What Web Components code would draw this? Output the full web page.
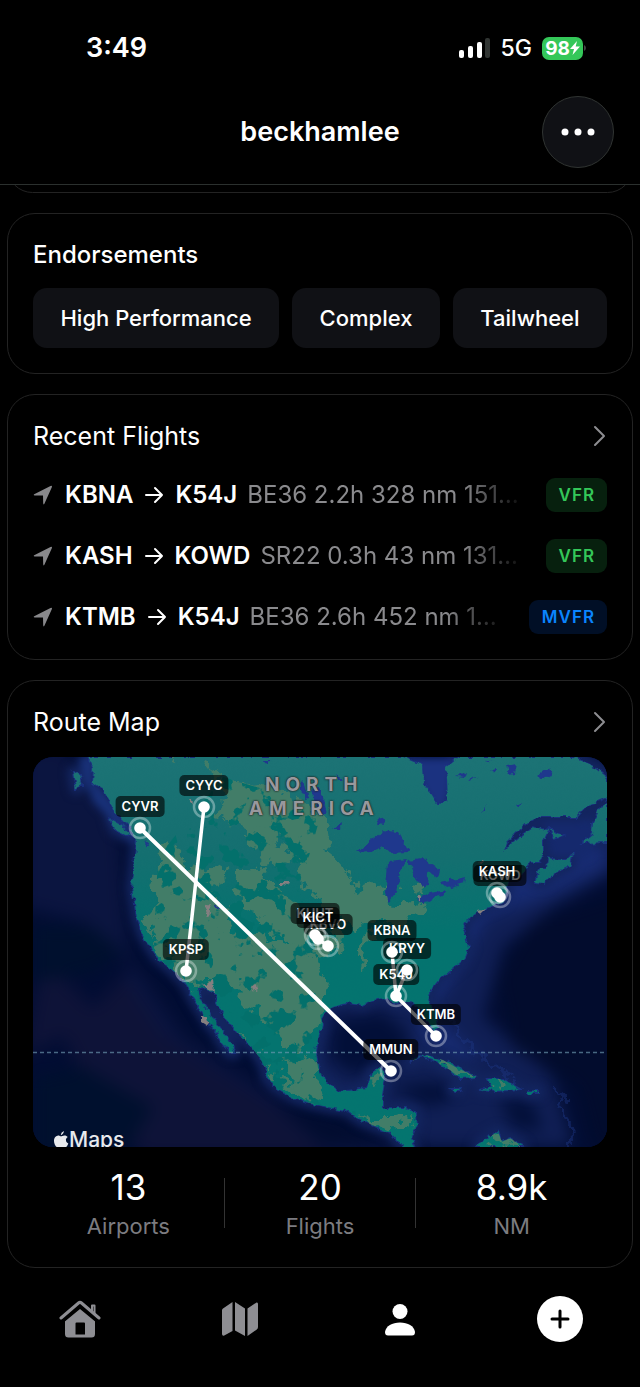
<!DOCTYPE html>
<html lang="en">
<head>
<meta charset="utf-8">
<meta name="viewport" content="width=device-width, initial-scale=1">
<title>beckhamlee</title>
<style>
  body {
    margin: 0;
    background: #000;
    color: #fff;
    font-family: Inter, "Liberation Sans", sans-serif;
  }
</style>
</head>
<body>
<profile-screen></profile-screen>

<script>
class BaseElement extends HTMLElement {
  constructor() {
    super();
    this.attachShadow({ mode: 'open' });
  }

  connectedCallback() {
    this.shadowRoot.innerHTML = `<style>* { box-sizing: border-box; } ${this.styles()}</style>${this.markup()}`;
  }

  styles() {
    return ':host { display: block; }';
  }

  markup() {
    return '<slot></slot>';
  }
}

class StatusBar extends BaseElement {
  styles() {
    return `
      :host { display: flex; justify-content: space-between; align-items: center; height: 96px; padding: 0 54px 0 86px; }
      time { font-size: 27px; font-weight: 600; line-height: 32px; }
      .right { display: flex; align-items: center; }
      .net { font-size: 23px; font-weight: 500; line-height: 24px; margin: 0 10px; }
      .battery { display: flex; align-items: center; justify-content: center; width: 41px; height: 23px; border-radius: 7px; background: #34c759; font-size: 19px; font-weight: 700; }
      svg { display: block; }
    `;
  }

  markup() {
    return `
      <time>3:49</time>
      <div class="right">
        <svg width="32" height="21" viewBox="0 0 32 21" fill="#fff" aria-hidden="true">
          <rect x="0" y="12" width="5" height="8" rx="2"/>
          <rect x="9" y="8" width="5" height="12" rx="2"/>
          <rect x="18" y="4" width="5" height="16" rx="2"/>
          <rect x="26" y="0" width="5" height="20" rx="2" fill="#303432"/>
        </svg>
        <span class="net">5G</span>
        <span class="battery">98<svg width="10" height="16" viewBox="0 0 10 16" fill="#fff" aria-hidden="true"><path d="M7 1 0 9h4l-1.500 6L10 6.500H5.700Z"/></svg></span>
        <svg width="3" height="8" viewBox="0 0 3 8" fill="#444" aria-hidden="true"><path d="M1 1Q3 2 3 4T1 7Z"/></svg>
      </div>
    `;
  }
}

class NavHeader extends BaseElement {
  styles() {
    return `
      :host { display: grid; grid-template-columns: 1fr auto 1fr; align-items: center; padding: 0 26px 16px; border-bottom: 1px solid #2b302e; }
      h1 { grid-column: 2; margin: 0; font-size: 27px; line-height: 32px; font-weight: 600; }
      button { justify-self: end; display: flex; align-items: center; justify-content: center; width: 72px; height: 72px; padding: 0; border: 1px solid #303432; border-radius: 50%; background: #101115; color: #fff; }
    `;
  }

  markup() {
    return `
      <h1><slot></slot></h1>
      <button aria-label="More">
        <svg width="34" height="8" viewBox="0 0 34 8" fill="currentColor"><circle cx="4" cy="4" r="3.500"/><circle cx="17" cy="4" r="3.500"/><circle cx="30" cy="4" r="3.500"/></svg>
      </button>
    `;
  }
}

class PanelCard extends BaseElement {
  styles() {
    return `
      :host { display: block; border: 1px solid #232323; border-radius: 28px; padding: 24px 25px 25px; }
      .head { display: flex; align-items: center; justify-content: space-between; color: inherit; text-decoration: none; }
      h2 { margin: 0; font-size: 25px; line-height: 34px; font-weight: 400; }
      :host([strong]) h2 { font-size: 24px; font-weight: 500; }
      svg { display: block; }
    `;
  }

  markup() {
    const title = this.getAttribute('heading');
    const href = this.getAttribute('href');
    if (!title) return '<slot></slot>';
    if (!href) return `<div class="head"><h2>${title}</h2></div><slot></slot>`;
    return `
      <a class="head" href="${href}">
        <h2>${title}</h2>
        <svg width="14" height="22" viewBox="0 0 14 22" fill="none" stroke="#8d8d91" stroke-width="2" stroke-linecap="round" stroke-linejoin="round" aria-hidden="true"><path d="m2 2 9 9-9 9"/></svg>
      </a>
      <slot></slot>
    `;
  }
}

class EndorsementChip extends BaseElement {
  styles() {
    return `
      :host { display: block; padding: 0 26px; border-radius: 14px; background: #101115; font-size: 22px; line-height: 60px; font-weight: 500; white-space: nowrap; text-align: center; }
    `;
  }
}

class FlightRow extends BaseElement {
  styles() {
    return `
      :host { display: flex; align-items: center; height: 35px; font-size: 24px; line-height: 34px; white-space: nowrap; }
      svg { display: block; flex: none; }
      .plane { margin-right: 12px; }
      .code { font-weight: 600; }
      .arrow { margin: 0 11px; }
      .details { flex: 1; min-width: 0; overflow: hidden; margin: 0 20px 0 10px; color: #8a8a8d;
        -webkit-mask-image: linear-gradient(to left, transparent, #000 64px); mask-image: linear-gradient(to left, transparent, #000 64px); }
      .badge { padding: 0 12px 0 13px; border-radius: 9px; font-size: 17px; line-height: 34px; font-weight: 600; letter-spacing: 1px; color: #34c759; background: #07200e; }
      .badge.MVFR { color: #0a84ff; background: #010f26; }
    `;
  }

  markup() {
    const rules = this.getAttribute('rules');
    return `
      <svg class="plane" width="20" height="20" viewBox="0 0 20 20" fill="#88888b" aria-hidden="true"><path d="M1.200 9.300 17.500 1.100q2-.8 1.300 1.200L11.400 18.700q-1 1.600-1.200-.4L10 10.600 1.700 10.500q-1.600-.3-.5-1.200Z"/></svg>
      <span class="code">${this.getAttribute('from')}</span>
      <svg class="arrow" width="20" height="20" viewBox="0 0 20 20" fill="none" stroke="#fff" stroke-width="2" stroke-linecap="round" stroke-linejoin="round" role="img" aria-label="to"><path d="M2 10h16M11 3l7 7-7 7"/></svg>
      <span class="code">${this.getAttribute('to')}</span>
      <span class="details"><slot></slot></span>
      <span class="badge ${rules}">${rules}</span>
    `;
  }
}

class MapPin extends BaseElement {
  styles() {
    // The host has no size: it marks the airport's spot on the map
    return `
      :host { position: absolute; width: 0; height: 0; }
      .dot { position: absolute; left: -12px; top: -12px; width: 24px; height: 24px; }
      .label { position: absolute; top: -32px; left: 0; transform: translateX(-50%); padding: 0 6px; border-radius: 5px; background: rgba(0, 0, 0, 0.62); font-size: 13px; line-height: 21px; font-weight: 600; }
    `;
  }

  markup() {
    return `
      <span class="label"><slot></slot></span>
      <svg class="dot" viewBox="0 0 24 24" aria-hidden="true"><circle cx="12" cy="12" r="10" fill="none" stroke="#fff" stroke-opacity=".35" stroke-width="2.500"/><circle cx="12" cy="12" r="5.800" fill="#fff"/></svg>
    `;
  }
}

const LAND = 'M55 0 60 11 59 25 70 33 77 46 87 61 97 71 104 83 102 98 101 115 99 131 102 148 104 161 110 178 119 193 125 201 137 211 145 218 154 228 160 241 169 255 175 266 184 276 189 286 197 296 202 296 197 286 189 273 179 260 167 243 165 231 174 230 182 238 187 253 197 266 207 278 217 288 227 301 232 311 234 321 244 331 260 340 277 346 300 351 314 353 327 363 344 370 357 375 367 386 369 390H382L378 381 383 368 382 355 372 351 349 351 349 338 352 321 349 311 339 315 334 331 320 333 307 335 294 325 285 311 283 295 285 281 289 268 287 258 300 250 314 246 330 248 340 243 352 241 364 246 377 245 387 251 394 263 402 275 405 270 402 255 395 245 399 231 407 221 420 211 430 203 435 191 430 171 437 161 447 153 457 150 470 143 474 131 477 121 490 116 497 105 507 105 510 98 510 85 515 73 500 70 489 78 477 88 470 95 474 85 484 75 495 66 504 60 544 60 555 48 574 40V21L564 13 550 3 540 0H425L412 11 414 21 415 43 405 48 399 38 390 26 389 8 370 0Z';

const ISLANDS = [
  'M502 125 507 111 514 111 515 101 524 103 534 103 540 96 537 108 524 115 510 126Z',
  'M574 43 565 55 560 65 559 78 550 86 574 85Z',
  'M377 305 392 298 410 303 424 311 444 320 427 321 417 313 400 303 387 299Z',
  'M455 322 470 322 478 327 487 332 464 334 447 332 459 330Z',
  'M419 332h8l1 2h-6Z', 'M495 334h10v2h-10Z',
  'M444 390 450 383 465 375 469 385 477 381 490 390Z',
  'M40 15 47 18 49 28 43 32ZM78 62 90 69 97 80 82 73Z',
  'M516 73 531 79 522 82Z'
];

const LAKES = [
  'M324 96 339 83 350 73 365 75 376 95 357 96 350 90 337 95Z',
  'M355 105 374 103 367 115 364 135 355 146 352 135 354 121Z',
  'M374 103 390 101 407 113 405 120 395 116 394 130 385 126 380 115Z',
  'M384 143 397 136 414 133 410 138 390 146Z',
  'M407 125 434 120 432 126 414 131Z',
  'M267 25 270 22 272 33 277 41 273 42 267 33Z', 'M279 27 288 34 294 56 289 59 284 50 280 42Z',
  'M345 61 350 60 352 68 344 67Z', 'M300 72 308 66 307 72Z', 'M303 18 309 22 305 22Z',
  'M232 3h5l-3 4ZM181 146l5 5-2 3-4-5ZM113 82l2 8-3 0Z',
  'M423 20 434 15 432 21ZM434 23 446 19 436 24ZM474 9 483 7 481 16 476 17ZM505 18 516 10 519 18 507 22ZM448 55 455 48 451 54ZM482 48l7-3-4 6ZM452 5l8-2-5 3ZM457 12l6-2-1 5Z'
];

const PLAINS = [
  'M187 27 196 20 227 27 267 43 295 63 299 97 314 113 330 132 350 123 352 143 397 150 384 163 347 168 317 167 284 140 267 123 264 97 244 73 217 77 200 67 180 60 190 44Z',
  'M122 102 134 88 146 98 160 115 177 112 190 105 191 122 178 138 190 150 196 174 212 180 232 178 262 190 284 200 294 230 288 262 275 280 278 290 262 296 244 276 225 258 205 238 188 228 165 228 140 215 119 193 122 184 110 164 124 148 118 126Z',
  'M205 112 230 110 244 132 266 150 285 166 308 178 295 204 260 190 230 165 208 140Z',
  'M208 70 240 68 245 86 217 94Z', 'M230 82 262 95 256 112 226 106Z',
  'M336 172 342 176 334 195 330 216 326 210 328 188Z',
  'M374 130 394 121 390 136 376 133Z',
  'M193 270 204 283 218 294 230 310 245 318 258 330 280 338 282 346 260 338 240 324 228 300Z',
  'M250 306 272 300 285 315 293 330 285 344 262 334Z',
  'M318 356 340 362 362 362 380 356 376 371 365 375 345 369Z',
  'M335 322 348 311 350 320 340 330Z',
  'M377 305 400 301 444 319 424 319 400 306Z', 'M455 322 480 326 470 333Z',
  'M464 376 468 384 478 381 488 389 456 388Z',
  'M177 10 192 17 180 24Z', 'M134 1h6l-2 4Z'
];

const DESERT = [
  'M165 228 174 227 180 222 181 236 174 229Z', 'M172 150 177 146 178 156 175 161Z',
  'M248 125l8 0-2 4-6-1Z', 'M218 230l4-3 1 6-4 2Z', 'M169 261l4-1 2 9-6-4Z',
  'M156 42l3 0 1 6ZM444 107l8-6-4 7Z', 'M386 137l3 2-2 5-3-4Z', 'M445 153l8-2-6 6Z'
];

const PINS = [
  ['MMUN', 358, 314], ['KTMB', 403, 279], ['K54J', 363, 239], ['KRYY', 374, 213],
  ['KBNA', 359, 195], ['KBVO', 295, 189], ['KUUT', 282, 178], ['KICT', 285, 182],
  ['KPSP', 153, 214], ['KOWD', 467, 140], ['KASH', 464, 136], ['CYVR', 107, 71], ['CYYC', 171, 50]
];

class RouteMap extends BaseElement {
  styles() {
    return `
      :host { display: block; position: relative; overflow: hidden; aspect-ratio: 574 / 390; border-radius: 20px; background: #020f35; }
      .terrain { display: block; width: 100%; height: 100%; }
      filter { color-interpolation-filters: sRGB; }
      .region { position: absolute; left: 49%; top: 4%; transform: translateX(-50%); font-size: 19px; line-height: 24px; font-weight: 700; letter-spacing: 6px; text-align: center; color: #99989d; text-shadow: 0 0 2px #222, 0 0 2px #222; }
      .brand { position: absolute; left: 20px; bottom: -6px; display: flex; align-items: center; font-size: 21px; line-height: 26px; font-weight: 500; color: #e8eaed; }
    `;
  }

  paths(list, fill) {
    return list.map(d => `<path d="${d}" fill="${fill}"/>`).join('');
  }

  markup() {
    const pins = PINS.map(([name, x, y]) =>
      `<map-pin style="left:calc(100% * ${x} / 574);top:calc(100% * ${y} / 390)">${name}</map-pin>`
    ).join('');
    const coast = [LAND, ...ISLANDS].join('');
    return `
      <svg class="terrain" viewBox="0 0 574 390" preserveAspectRatio="none" aria-hidden="true">
        <defs>
          <filter id="soft" x="-20%" y="-20%" width="140%" height="140%"><feGaussianBlur stdDeviation="8"/></filter>
          <filter id="shelf" x="-20%" y="-20%" width="140%" height="140%"><feGaussianBlur stdDeviation="4"/></filter>
          <filter id="rough"><feTurbulence type="fractalNoise" baseFrequency=".14" numOctaves="3" seed="4"/><feDisplacementMap in="SourceGraphic" scale="7" xChannelSelector="R" yChannelSelector="G"/></filter>
          <filter id="rougher"><feTurbulence type="fractalNoise" baseFrequency=".07" numOctaves="4" seed="9"/><feDisplacementMap in="SourceGraphic" scale="28" xChannelSelector="R" yChannelSelector="G"/></filter>
          <filter id="patches" x="0" y="0" width="100%" height="100%"><feTurbulence type="fractalNoise" baseFrequency=".055" numOctaves="4" seed="12"/><feColorMatrix values="0 0 0 0 0.01  0 0 0 0 .44  0 0 0 0 .42  20 0 0 0 -11.600"/><feComposite in2="SourceGraphic" operator="in"/></filter>
          <linearGradient id="ground" x1="0" y1="0" x2="0" y2="1"><stop offset="0" stop-color="#1c7375"/><stop offset=".25" stop-color="#146f70"/><stop offset=".45" stop-color="#04736f"/><stop offset="1" stop-color="#04756f"/></linearGradient>
          <clipPath id="coast"><path d="${coast}"/></clipPath>
        </defs>
        <rect width="574" height="390" fill="#020d33"/>
        <g filter="url(#soft)">
          <path d="M30-10 85 60 95 200 150 280 240 340 380 400H130L60 250 100 210 50 165-10 150V-10Z" fill="#0b1540"/>
          <path d="M10 200 60 250 90 220 130 280 240 350 300 400H110L60 340 30 280-10 300Z" fill="#0e1338"/>
          <path d="M420 0H590V110L520 150 470 190 450 260 520 320 540 390H390L340 340H290L270 260 380 230Z" fill="#101f55"/>
          <path d="M590 135 500 165 465 220 480 290 545 330 560 390H590Z" fill="#020c2d"/>
          <path d="M0 168 60 170 90 195 60 215 0 225ZM0 320 50 310 120 350 90 400H0Z" fill="#00102e"/>
          <path d="M300 265 350 255 378 280 365 300 320 318 295 300ZM355 330 400 325 430 333 400 350ZM465 340 500 345 510 375 480 370Z" fill="#020f38"/>
          <path d="M240 345 300 360 350 390H290Z" fill="#020d30"/>
          <path d="M500 75 574 50V112L520 138 455 160 438 190 410 240 390 250 415 270 450 305 420 300 385 280 395 220 430 160Z" fill="#172b72"/>
        </g>
        <g filter="url(#shelf)">
          <path d="${coast}" fill="none" stroke="#13255f" stroke-width="12" stroke-linejoin="round"/>
          <path d="M44 0 60 0 60 25 100 70 104 90 60 45Z" fill="#19327b"/>
          <path d="M375 0H425L412 55H400Z" fill="#1b3280"/>
          <path d="M510 65H574L555 100H520Z" fill="#15296d"/>
        </g>
        <path d="M520 330Q538 345 538 385M410 258Q424 280 450 300T480 325" filter="url(#rougher)" fill="none" stroke="#1c3580" stroke-width="4" stroke-opacity=".45"/>
        <g filter="url(#rough)">
          <path d="${coast}" fill="url(#ground)" stroke="#1b3586" stroke-width="2" stroke-opacity=".8" paint-order="stroke"/>
        </g>
        <g clip-path="url(#coast)">
          <g filter="url(#rougher)">${this.paths(PLAINS, '#427d68')}</g>
          <path d="M125 100 190 20 290 50 270 120 310 170 280 205 290 340 360 370 240 340 120 200Z" fill="#000" filter="url(#patches)"/>
        </g>
        <g filter="url(#rough)">${this.paths(LAKES, '#1f388d')}${this.paths(DESERT, '#857f80')}</g>
        <path d="M0 295.500H574" stroke="#6e9ab0" stroke-opacity=".65" stroke-width="1.500" stroke-dasharray="4 3" fill="none"/>
        <g stroke="#fff" stroke-linecap="round" fill="none">
          <path d="M107 71 358 314" stroke-width="4"/>
          <path d="M171 50 153 214M374 213 363 239 359 195M363 239 403 279M282 178 285 182 295 189M464 136 467 140" stroke-width="3.500"/>
        </g>
      </svg>
      <div class="region">NORTH<br>AMERICA</div>
      ${pins}
      <div class="brand">
        <svg width="16" height="20" viewBox="0 0 16 20" fill="currentColor" aria-hidden="true"><path d="M10.800 1Q11 4 7.800 5.200 7.600 2.400 10.800 1ZM8 6.300c1 0 2-.9 3.500-.8 1.400 0 2.500.6 3.200 1.600-2.700 1.700-2.300 5.100.6 6.300-.7 1.900-2.100 4.200-3.700 4.200-1.200 0-1.700-.7-3.200-.7s-2 .7-3.200.7C3.200 17.600 1 14.400 1 11c0-3.300 2-5.400 4.300-5.500 1.100 0 1.900.8 2.700.8Z"/></svg>
        <span>Maps</span>
      </div>
    `;
  }
}

class StatItem extends BaseElement {
  styles() {
    return `
      :host { display: block; flex: 1; text-align: center; }
      .value { font-size: 35px; line-height: 46px; }
      .label { font-size: 22px; line-height: 32px; color: #7c7c80; }
    `;
  }

  markup() {
    return `<div class="value">${this.getAttribute('value')}</div><div class="label"><slot></slot></div>`;
  }
}

class TabBar extends BaseElement {
  styles() {
    return `
      :host { display: block; padding: 28px 0 44px; }
      nav { display: grid; grid-template-columns: repeat(4, 1fr); align-items: center; justify-items: center; }
      a { display: flex; color: #8e8e93; }
      a[aria-current] { color: #fff; }
      button { display: flex; align-items: center; justify-content: center; width: 46px; height: 46px; padding: 0; border: 0; border-radius: 50%; background: #fff; color: #000; }
    `;
  }

  markup() {
    return `
      <nav>
        <a href="#home" aria-label="Home">
          <svg width="42" height="38" viewBox="0 0 42 38" fill="currentColor"><path d="M21 7.500 6 20.500V34q0 3.500 3.500 3.500h23q3.500 0 3.500-3.500V20.500ZM17.500 22.500h7.500q1 0 1 1v11H16.500v-11q0-1 1-1Z" fill-rule="evenodd"/><path d="M33 11V5.500h2.500V14" fill="none" stroke="currentColor" stroke-width="2" stroke-linejoin="round"/><path d="M21 5 4 20v3L21 9l17 14v-3Z" fill="#000"/><path d="M2 18 19.500 3q1.500-1.300 3 0L40 18" fill="none" stroke="currentColor" stroke-width="3" stroke-linecap="round" stroke-linejoin="round"/></svg>
        </a>
        <a href="#map" aria-label="Map">
          <svg width="38" height="36" viewBox="0 0 38 36" fill="currentColor"><path d="M2 7.500 11.500 1v29L2.800 34.800Q1 35 1 33V9.500Q1 8 2 7.500ZM14 1l10 6.500V35l-10-5.500ZM26.500 7.500 35.500 1.500Q37 1 37 3v23q0 1.500-1.200 2.500L26.500 35Z"/></svg>
        </a>
        <a href="#profile" aria-label="Profile" aria-current="page">
          <svg width="30" height="33" viewBox="0 0 30 33" fill="currentColor"><circle cx="15" cy="8.500" r="7.500"/><path d="M0 29C1 23 7 19.500 15 19.500S29 23 30 29q0 3.500-3 3.500H3Q0 32.500 0 29Z"/></svg>
        </a>
        <button aria-label="Add flight">
          <svg width="20" height="20" viewBox="0 0 20 20" fill="none" stroke="currentColor" stroke-width="3" stroke-linecap="round"><path d="M10 2v16M2 10h16"/></svg>
        </button>
      </nav>
    `;
  }
}

class ProfileScreen extends BaseElement {
  styles() {
    return `
      :host { display: flex; flex-direction: column; min-height: 100vh; }
      main { display: flex; flex-direction: column; gap: 20px; padding: 0 7px; }
      .previous { display: flex; align-items: flex-end; height: 8px; overflow: hidden; }
      .previous panel-card { flex: 1; }
      .chips { display: flex; gap: 13px; margin-top: 16px; }
      .chips > * { flex: auto; }
      .flights { display: grid; gap: 26px; margin-top: 24px; }
      route-map { margin: 18px 0 17px; }
      .stats { display: flex; align-items: center; }
      .stats i { width: 1px; height: 50px; background: #333; }
    `;
  }

  markup() {
    return `
      <header>
        <status-bar></status-bar>
        <nav-header>beckhamlee</nav-header>
      </header>
      <main>
        <div class="previous"><panel-card></panel-card></div>
        <panel-card heading="Endorsements" strong>
          <div class="chips">
            <endorsement-chip>High Performance</endorsement-chip>
            <endorsement-chip>Complex</endorsement-chip>
            <endorsement-chip>Tailwheel</endorsement-chip>
          </div>
        </panel-card>
        <panel-card heading="Recent Flights" href="#flights">
          <div class="flights">
            <flight-row from="KBNA" to="K54J" rules="VFR">BE36 2.2h 328 nm 151…</flight-row>
            <flight-row from="KASH" to="KOWD" rules="VFR">SR22 0.3h 43 nm 131…</flight-row>
            <flight-row from="KTMB" to="K54J" rules="MVFR">BE36 2.6h 452 nm 1…</flight-row>
          </div>
        </panel-card>
        <panel-card heading="Route Map" href="#routes">
          <route-map></route-map>
          <div class="stats">
            <stat-item value="13">Airports</stat-item>
            <i></i>
            <stat-item value="20">Flights</stat-item>
            <i></i>
            <stat-item value="8.9k">NM</stat-item>
          </div>
        </panel-card>
      </main>
      <tab-bar></tab-bar>
    `;
  }
}

customElements.define('status-bar', StatusBar);
customElements.define('nav-header', NavHeader);
customElements.define('panel-card', PanelCard);
customElements.define('endorsement-chip', EndorsementChip);
customElements.define('flight-row', FlightRow);
customElements.define('map-pin', MapPin);
customElements.define('route-map', RouteMap);
customElements.define('stat-item', StatItem);
customElements.define('tab-bar', TabBar);
customElements.define('profile-screen', ProfileScreen);
</script>
</body>
</html>
